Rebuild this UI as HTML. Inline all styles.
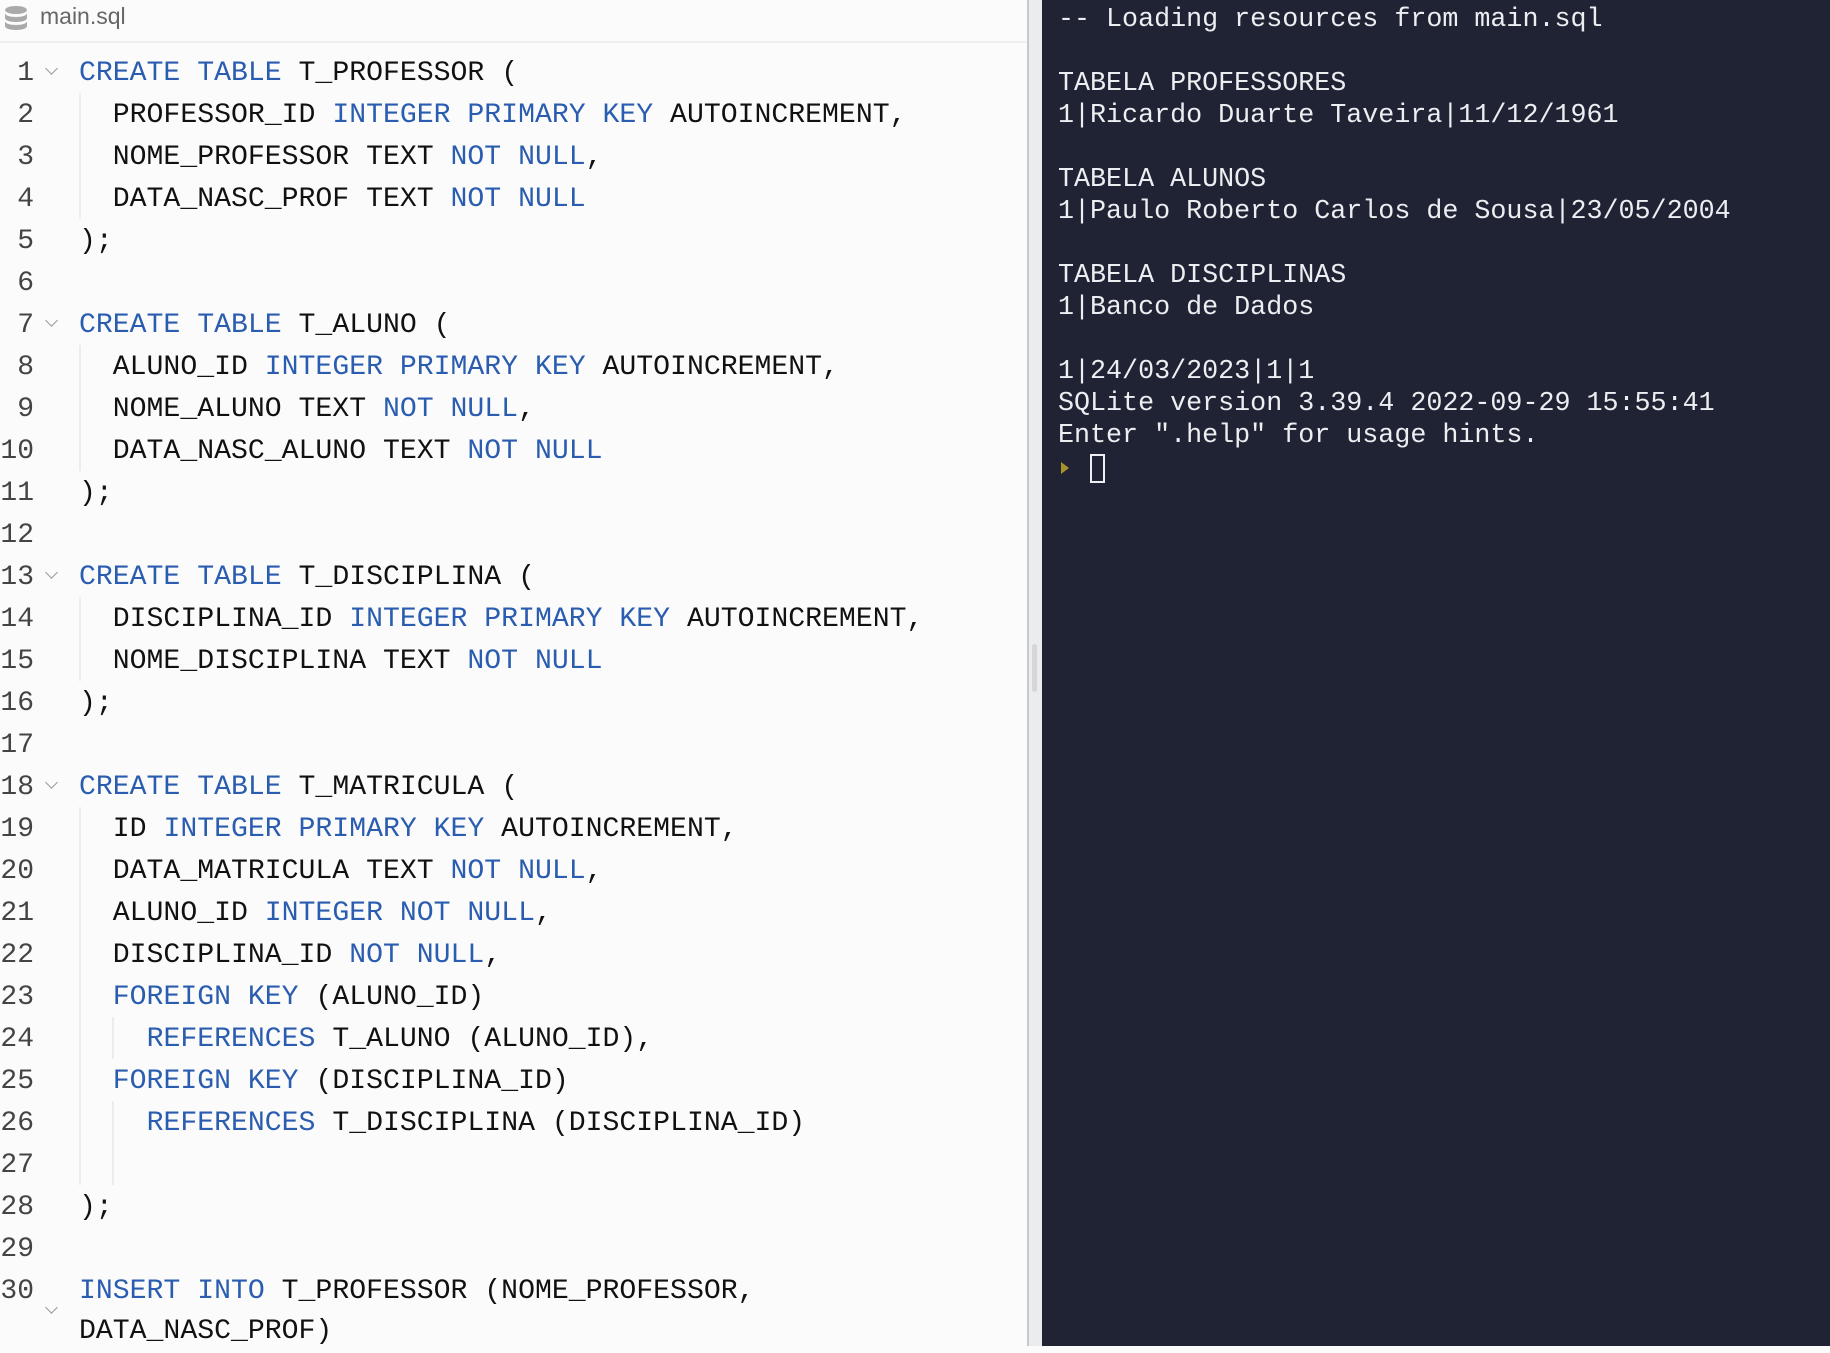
<!DOCTYPE html>
<html><head><meta charset="utf-8"><style>
*{margin:0;padding:0;box-sizing:border-box}
body{width:1830px;height:1346px;overflow:hidden;background:#fbfbfb;position:relative;font-family:"Liberation Mono",monospace}
#hdr{position:absolute;left:0;top:0;width:1027px;height:43px;border-bottom:2px solid #efefef;background:#fbfbfb}
#hdr span{position:absolute;left:40px;top:3px;font-family:"Liberation Sans",sans-serif;font-size:23px;color:#666}
.ln{position:absolute;left:0;width:34px;text-align:right;font-size:28px;color:#444;height:42px;line-height:42px;margin-top:2px}
.c{position:absolute;left:79px;font-size:28.15px;color:#111;height:42px;line-height:42px;white-space:pre;margin-top:2px}
.k{color:#2a5db0}
.chev{position:absolute;left:47px;width:9px;height:9px;border-right:1.5px solid #999;border-bottom:1.5px solid #999;transform:rotate(45deg)}
.g{position:absolute;width:2px;background:#ececec}
#sep{position:absolute;left:1027px;top:0;width:2px;height:1346px;background:#c8c8c8}
#pane{position:absolute;left:1029px;top:0;width:13px;height:1346px;background:#ebecee}
#handle{position:absolute;left:1032px;top:644px;width:5px;height:48px;border-radius:3px;background:#d6d6d8}
#term{position:absolute;left:1042px;top:0;width:788px;height:1346px;background:#1f2333}
.t{position:absolute;left:1058px;font-size:26.7px;color:#eceef2;white-space:pre;height:32px;line-height:32px}
</style></head><body>
<div id="hdr"><svg style="position:absolute;left:4px;top:5px" width="24" height="26" viewBox="0 0 24 26"><ellipse cx="12" cy="5" rx="11" ry="4" fill="#aaa"/><path d="M1 8c0 2.5 5 4 11 4s11-1.5 11-4v5c0 2.5-5 4-11 4S1 15.5 1 13z" fill="#aaa"/><path d="M1 16c0 2.5 5 4 11 4s11-1.5 11-4v5c0 2.5-5 4-11 4S1 23.5 1 21z" fill="#aaa"/></svg><span>main.sql</span></div>

<div class="g" style="left:79px;top:93px;height:126px"></div>
<div class="g" style="left:79px;top:345px;height:126px"></div>
<div class="g" style="left:79px;top:597px;height:84px"></div>
<div class="g" style="left:79px;top:807px;height:378px"></div>
<div class="g" style="left:112px;top:1017px;height:42px"></div>
<div class="g" style="left:112px;top:1101px;height:84px"></div>

<div class="ln" style="top:51px">1</div><div class="chev" style="top:64px"></div><div class="c" style="top:51px"><span class="k">CREATE TABLE</span> T_PROFESSOR (</div>
<div class="ln" style="top:93px">2</div><div class="c" style="top:93px">  PROFESSOR_ID <span class="k">INTEGER PRIMARY KEY</span> AUTOINCREMENT,</div>
<div class="ln" style="top:135px">3</div><div class="c" style="top:135px">  NOME_PROFESSOR TEXT <span class="k">NOT NULL</span>,</div>
<div class="ln" style="top:177px">4</div><div class="c" style="top:177px">  DATA_NASC_PROF TEXT <span class="k">NOT NULL</span></div>
<div class="ln" style="top:219px">5</div><div class="c" style="top:219px">);</div>
<div class="ln" style="top:261px">6</div>
<div class="ln" style="top:303px">7</div><div class="chev" style="top:316px"></div><div class="c" style="top:303px"><span class="k">CREATE TABLE</span> T_ALUNO (</div>
<div class="ln" style="top:345px">8</div><div class="c" style="top:345px">  ALUNO_ID <span class="k">INTEGER PRIMARY KEY</span> AUTOINCREMENT,</div>
<div class="ln" style="top:387px">9</div><div class="c" style="top:387px">  NOME_ALUNO TEXT <span class="k">NOT NULL</span>,</div>
<div class="ln" style="top:429px">10</div><div class="c" style="top:429px">  DATA_NASC_ALUNO TEXT <span class="k">NOT NULL</span></div>
<div class="ln" style="top:471px">11</div><div class="c" style="top:471px">);</div>
<div class="ln" style="top:513px">12</div>
<div class="ln" style="top:555px">13</div><div class="chev" style="top:568px"></div><div class="c" style="top:555px"><span class="k">CREATE TABLE</span> T_DISCIPLINA (</div>
<div class="ln" style="top:597px">14</div><div class="c" style="top:597px">  DISCIPLINA_ID <span class="k">INTEGER PRIMARY KEY</span> AUTOINCREMENT,</div>
<div class="ln" style="top:639px">15</div><div class="c" style="top:639px">  NOME_DISCIPLINA TEXT <span class="k">NOT NULL</span></div>
<div class="ln" style="top:681px">16</div><div class="c" style="top:681px">);</div>
<div class="ln" style="top:723px">17</div>
<div class="ln" style="top:765px">18</div><div class="chev" style="top:778px"></div><div class="c" style="top:765px"><span class="k">CREATE TABLE</span> T_MATRICULA (</div>
<div class="ln" style="top:807px">19</div><div class="c" style="top:807px">  ID <span class="k">INTEGER PRIMARY KEY</span> AUTOINCREMENT,</div>
<div class="ln" style="top:849px">20</div><div class="c" style="top:849px">  DATA_MATRICULA TEXT <span class="k">NOT NULL</span>,</div>
<div class="ln" style="top:891px">21</div><div class="c" style="top:891px">  ALUNO_ID <span class="k">INTEGER NOT NULL</span>,</div>
<div class="ln" style="top:933px">22</div><div class="c" style="top:933px">  DISCIPLINA_ID <span class="k">NOT NULL</span>,</div>
<div class="ln" style="top:975px">23</div><div class="c" style="top:975px">  <span class="k">FOREIGN KEY</span> (ALUNO_ID)</div>
<div class="ln" style="top:1017px">24</div><div class="c" style="top:1017px">    <span class="k">REFERENCES</span> T_ALUNO (ALUNO_ID),</div>
<div class="ln" style="top:1059px">25</div><div class="c" style="top:1059px">  <span class="k">FOREIGN KEY</span> (DISCIPLINA_ID)</div>
<div class="ln" style="top:1101px">26</div><div class="c" style="top:1101px">    <span class="k">REFERENCES</span> T_DISCIPLINA (DISCIPLINA_ID)</div>
<div class="ln" style="top:1143px">27</div>
<div class="ln" style="top:1185px">28</div><div class="c" style="top:1185px">);</div>
<div class="ln" style="top:1227px">29</div>
<div class="ln" style="top:1269px">30</div><div class="c" style="top:1269px"><span class="k">INSERT INTO</span> T_PROFESSOR (NOME_PROFESSOR,</div>
<div class="chev" style="top:1303px"></div><div class="c" style="top:1309px">DATA_NASC_PROF)</div>

<div id="sep"></div><div id="pane"></div><div id="handle"></div>
<div id="term"></div>
<div class="t" style="top:4px">-- Loading resources from main.sql</div>
<div class="t" style="top:68px">TABELA PROFESSORES</div>
<div class="t" style="top:100px">1|Ricardo Duarte Taveira|11/12/1961</div>
<div class="t" style="top:164px">TABELA ALUNOS</div>
<div class="t" style="top:196px">1|Paulo Roberto Carlos de Sousa|23/05/2004</div>
<div class="t" style="top:260px">TABELA DISCIPLINAS</div>
<div class="t" style="top:292px">1|Banco de Dados</div>
<div class="t" style="top:356px">1|24/03/2023|1|1</div>
<div class="t" style="top:388px">SQLite version 3.39.4 2022-09-29 15:55:41</div>
<div class="t" style="top:420px">Enter ".help" for usage hints.</div>
<div style="position:absolute;left:1061px;top:462px;width:0;height:0;border-left:8px solid #a8922a;border-top:6px solid transparent;border-bottom:6px solid transparent"></div>
<div style="position:absolute;left:1090px;top:454px;width:15px;height:29px;border:2px solid #eceef2"></div>
</body></html>
